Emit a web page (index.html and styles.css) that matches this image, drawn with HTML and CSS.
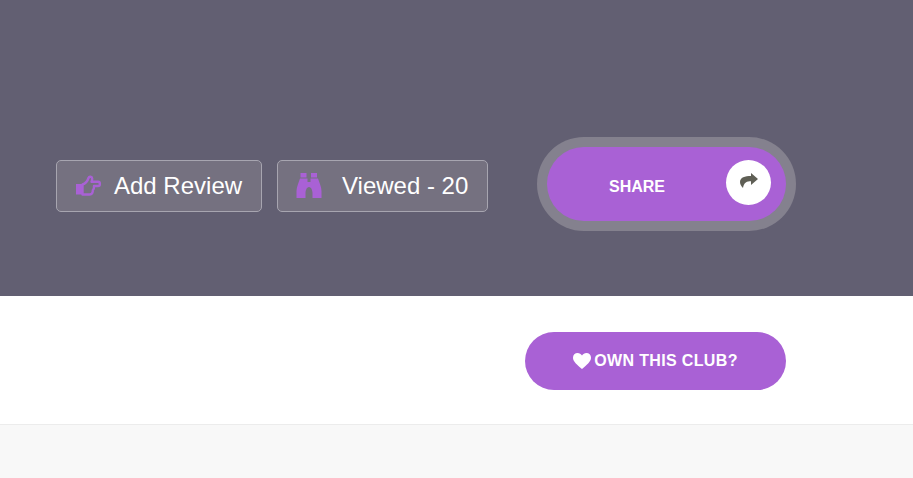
FILE: index.html
```html
<!DOCTYPE html>
<html lang="en">
<head>
    <meta charset="UTF-8">
    <meta name="viewport" content="width=device-width, initial-scale=1.0">
    <title>Club</title>
    <link rel="stylesheet" href="styles.css">
</head>
<body>
    <div class="hero">
        <a class="stat-btn review-btn" href="#">
            <svg class="hand-icon" viewBox="0 0 28 24" width="28" height="24">
                <path d="M1 10h6.500v10.500H1z" fill="#a961d5"/>
                <path d="M7.500 10.500c3-.8 5-3.500 6-6.500.7-2 3.700-1.500 3.700.8 0 1-.3 2-.7 3H23c2.500 0 2.500 4.200 0 4.200h-4c.2 2-.2 3.500-1.200 4.200.2 2.400-1 4.300-3 4.300H7.500z" fill="none" stroke="#a961d5" stroke-width="2.400" stroke-linejoin="round"/>
            </svg>
            <span>Add Review</span>
        </a>
        <a class="stat-btn viewed-btn" href="#">
            <svg class="binoculars-icon" viewBox="0 0 26 26" width="26" height="26">
                <path d="M4.500 0h6v4.500h-6zM15 0h6v4.500h-6z" fill="#a961d5"/>
                <path d="M4 5.500h7.500V9h3V5.500H22c1 3.500 3.500 8 3.500 12.500v7h-9v-5c0-2-1-6-3.500-6s-3.500 4-3.500 6v5H.5v-7C.5 13.500 3 9 4 5.500z" fill="#a961d5"/>
            </svg>
            <span>Viewed - 20</span>
        </a>
        <div class="share-ring">
            <a class="share-btn" href="#">
                <span class="share-label">SHARE</span>
                <span class="share-circle">
                    <svg viewBox="0 0 18 15" width="18" height="15">
                        <path d="M11 0l7 6-7 6V8.200C7 8.200 4 9 3 15 1 13 0 11 0 9c0-4.500 5-6 11-6z" fill="#5f5f55"/>
                    </svg>
                </span>
            </a>
        </div>
    </div>
    <div class="owner-row">
        <a class="own-btn" href="#">
            <svg viewBox="0 0 18 16" width="18" height="16">
                <path d="M9 16C4 11.500 0 8.500 0 4.700 0 2 2 0 4.600 0 6.400 0 8 1 9 2.600 10 1 11.600 0 13.400 0 16 0 18 2 18 4.700c0 3.800-4 6.800-9 11.300z" fill="#fff"/>
            </svg>
            <span>OWN THIS CLUB?</span>
        </a>
    </div>
    <div class="footer-strip"></div>
</body>
</html>
```

FILE: styles.css
```css
body {
    margin: 0;
    font-family: "Liberation Sans", Arial, sans-serif;
    background-color: #fff;
}
a {
    text-decoration: none;
    color: #fff;
}
.hero {
    display: flex;
    align-items: center;
    height: 94px;
    padding: 137px 0 65px 56px;
    background-color: #625f72;
}
.stat-btn {
    display: flex;
    align-items: center;
    box-sizing: border-box;
    height: 52px;
    margin-top: 4px;
    border: 1px solid #a7a5b0;
    border-radius: 5px;
    background-color: #757180;
    font-size: 24px;
}
.review-btn {
    width: 206px;
    padding-left: 18px;
    gap: 11px;
}
.viewed-btn {
    width: 211px;
    margin-left: 15px;
    padding-left: 18px;
    gap: 20px;
}
.share-ring {
    box-sizing: border-box;
    width: 259px;
    height: 94px;
    margin-left: 49px;
    padding: 10px;
    border-radius: 47px;
    background-color: #84818e;
}
.share-btn {
    display: flex;
    align-items: center;
    height: 74px;
    padding: 0 15px 0 62px;
    border-radius: 37px;
    background-color: #a961d5;
}
.share-label {
    flex: 1;
    margin-top: 5px;
    font-size: 16px;
    font-weight: bold;
}
.share-circle {
    display: flex;
    align-items: center;
    justify-content: center;
    width: 45px;
    height: 45px;
    margin-bottom: 4px;
    border-radius: 50%;
    background-color: #fff;
}
.share-circle svg {
    margin-bottom: 4px;
}
.owner-row {
    display: flex;
    height: 129px;
    box-sizing: border-box;
    padding: 36px 0 0 525px;
    border-bottom: 1px solid #ececec;
}
.own-btn {
    display: flex;
    align-items: center;
    justify-content: center;
    gap: 3px;
    width: 261px;
    height: 58px;
    border-radius: 29px;
    background-color: #a961d5;
    font-size: 16px;
    font-weight: bold;
    letter-spacing: 0.35px;
}
.footer-strip {
    height: 53px;
    background-color: #f8f8f8;
}
```
